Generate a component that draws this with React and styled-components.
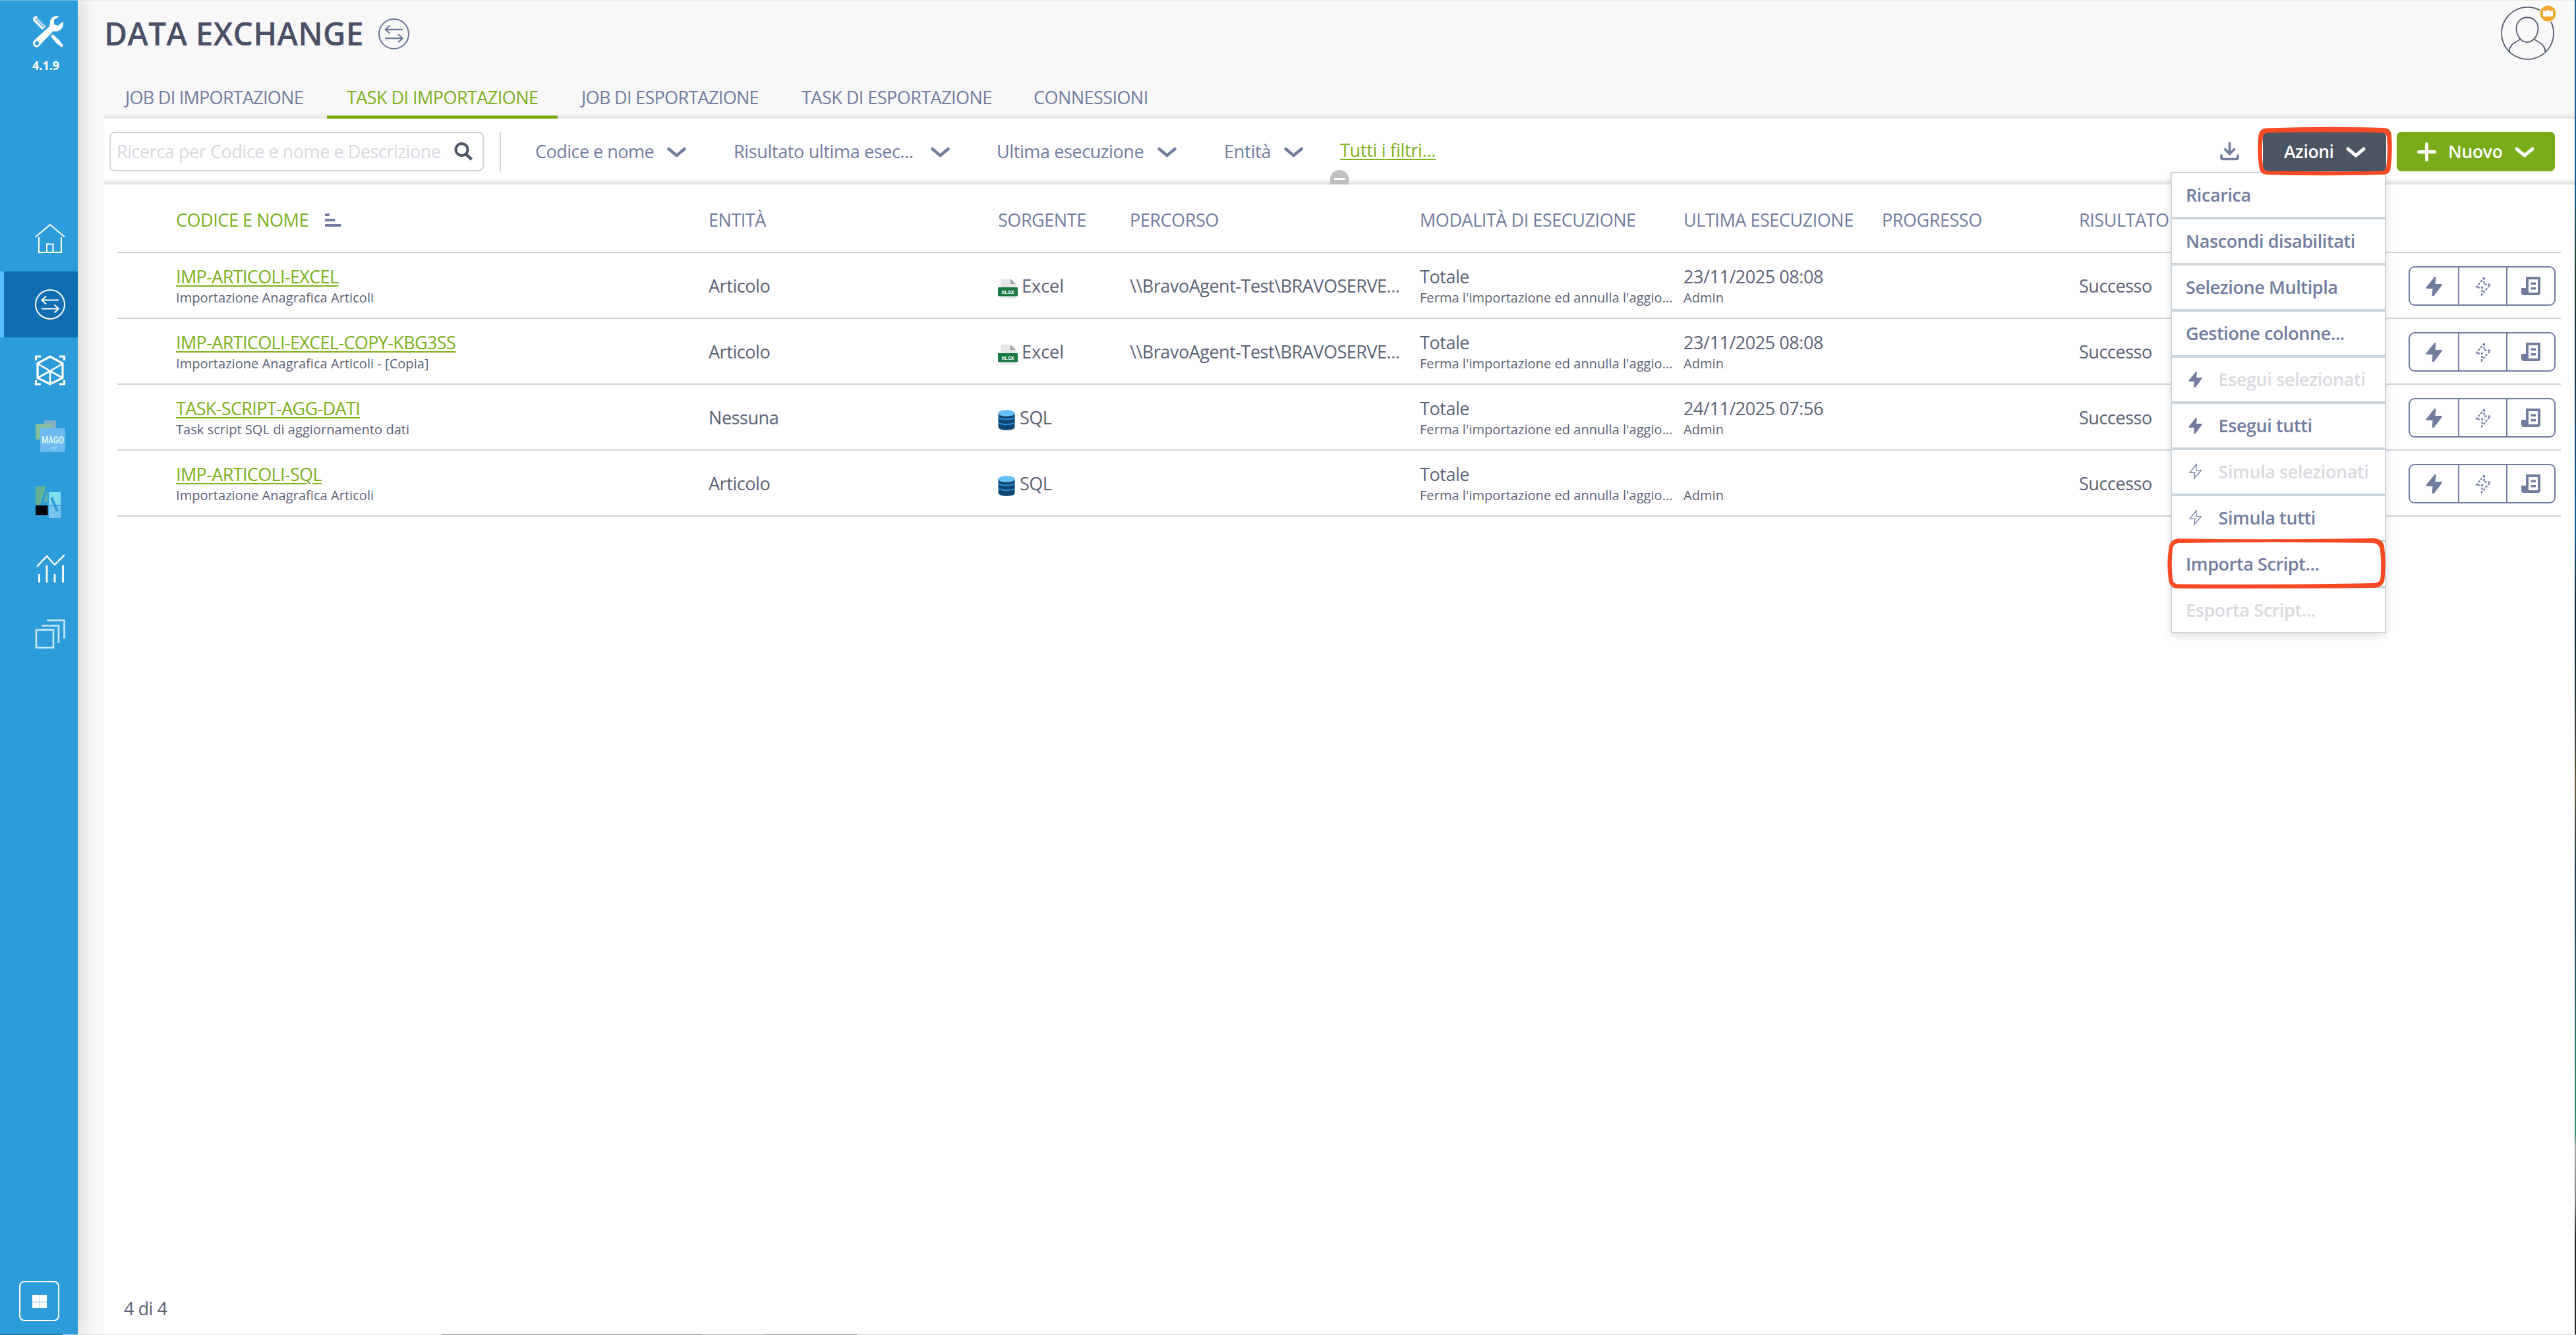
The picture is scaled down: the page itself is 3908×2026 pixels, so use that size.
import React from "react";
import styled, { createGlobalStyle, css } from "styled-components";

const colors = {
  blue: "#2d9cdb",
  blueDark: "#0f6db2",
  blueLight: "#56bfff",
  green: "#7aab18",
  greenText: "#7cb01c",
  slate: "#4b5563",
  muted: "#717c9f",
  text: "#5a6275",
  line: "#cfd3db",
  border: "#ccd5dc",
  disabled: "#d9dbe0",
  red: "#f74923",
};

const GlobalStyle = createGlobalStyle`
  * { box-sizing: border-box; }
  body {
    margin: 0;
    font-family: "Open Sans", "Noto Sans", sans-serif;
    font-size: 27px;
    letter-spacing: -0.45px;
    color: ${colors.text};
    background: #fff;
    overflow: hidden;
  }
`;

/* ---------- shell ---------- */

const Screen = styled.div`
  width: 3908px;
  height: 2026px;
  display: grid;
  grid-template-columns: 118px 1fr 2px;
  grid-template-rows: 2025px 1px;
  overflow: hidden;
`;

const RightEdge = styled.div`
  background: linear-gradient(
    to bottom,
    #1f6496 0%, #1d5c8c 14%, #17402f 20%, #12314a 27%, #1c5f93 39%, #0d2233 46%,
    #22343a 52%, #6b5a41 59%, #1c3a48 65%, #2c6666 75%, #3f8a76 85%, #a6a8a6 86%,
    #7d8080 90%, #1d2222 93%, #262a2a 100%
  );
`;

const BottomEdge = styled.div`
  grid-column: 1 / -1;
  background: linear-gradient(
    to right,
    #1b6c8c 0 95px, #dedede 95px 670px, #8f8f85 670px 1065px, #aaaaaa 1065px 1160px, #8f8f85 1160px 1300px, #d4d4d4 1300px
  );
`;

/* ---------- sidebar ---------- */

const Sidebar = styled.nav`
  display: flex;
  flex-direction: column;
  background: ${colors.blue};
  border-top: 1px solid #7dbde3;
  position: relative;
  z-index: 1;
  box-shadow: 4px 0 26px rgba(0, 0, 0, 0.16);
`;

const Brand = styled.div`
  height: 311px;
  padding: 22px 0 0 48px;
  color: #fff;
`;

const Version = styled.div`
  margin-top: 11px;
  padding-left: 1px;
  font-size: 18px;
  font-weight: 700;
  line-height: 30px;
  letter-spacing: 0;
`;

const NavItem = styled.a`
  height: 100px;
  display: flex;
  align-items: center;
  padding-left: 53px;
  color: #fff;
  ${(p) =>
    p.$active &&
    css`
      background: linear-gradient(to right, ${colors.blueLight} 6px, ${colors.blueDark} 6px);
    `}
  svg {
    display: block;
    overflow: visible;
  }
`;

const AppsButton = styled.button`
  margin: auto 0 20px 29px;
  width: 61px;
  height: 61px;
  padding: 0;
  display: grid;
  place-items: center;
  border: 2.5px solid #fff;
  border-radius: 8px;
  background: transparent;
`;

/* ---------- header ---------- */

const Main = styled.main`
  display: flex;
  flex-direction: column;
  padding-left: 40px;
  background: #f8f8f8;
  border-top: 1px solid #ececec;
`;

const Header = styled.header`
  height: 116px;
  display: flex;
  justify-content: space-between;
  padding: 9px 29px 0 0;
`;

const TitleGroup = styled.div`
  display: flex;
  height: 82px;
  align-items: center;
`;

const Title = styled.h1`
  margin: 0;
  width: 416px;
  font-size: 48px;
  font-weight: 600;
  line-height: 82px;
  color: #4a5068;
  letter-spacing: 0.1px;
  white-space: nowrap;
`;

const Avatar = styled.div`
  width: 83px;
  height: 82px;
  svg {
    display: block;
    overflow: visible;
  }
`;

const Tabs = styled.div`
  display: flex;
  height: 63px;
  background: linear-gradient(to bottom, #f8f8f8 55px, #e0e0e0 63px);
`;

const Tab = styled.a`
  width: ${(p) => p.$w}px;
  padding-left: ${(p) => p.$pl || 30}px;
  line-height: 61px;
  white-space: nowrap;
  letter-spacing: ${(p) => p.$ls}px;
  color: ${(p) => (p.$active ? colors.greenText : colors.muted)};
  ${(p) =>
    p.$active &&
    css`
      box-shadow: inset 0 -4.5px 0 #75a90a;
    `}
`;

/* ---------- toolbar ---------- */

const Toolbar = styled.div`
  height: 100px;
  padding: 20px 30px 0 8px;
  display: flex;
  background: linear-gradient(to bottom, #fff 90px, #f5f5f5 94px, #dedede 100px);
  position: relative;
  z-index: 2;
`;

const Search = styled.div`
  width: 568px;
  height: 60px;
  display: flex;
  align-items: center;
  justify-content: space-between;
  padding: 0 14px 1px 9px;
  border: 2px solid ${colors.border};
  border-radius: 8px;
  background: #fff;
  color: #d9d9e2;
  white-space: nowrap;
  svg {
    flex: none;
  }
`;

const Divider = styled.div`
  width: 2px;
  height: 60px;
  margin: 0 52px 0 24px;
  background: ${colors.border};
`;

const Filter = styled.button`
  width: ${(p) => p.$w}px;
  height: 59px;
  padding: 0;
  display: flex;
  align-items: center;
  border: 0;
  background: none;
  font: inherit;
  letter-spacing: inherit;
  text-align: left;
  color: ${colors.muted};
  white-space: nowrap;
  svg {
    margin-top: 3px;
  }
`;

const Label = styled.span`
  width: ${(p) => p.$w}px;
  letter-spacing: ${(p) => p.$ls}px;
  margin-left: ${(p) => p.$ml || 0}px;
  text-align: left;
  white-space: nowrap;
`;

const AllFilters = styled.a`
  line-height: 55px;
  height: 58px;
  color: ${colors.greenText};
  letter-spacing: -0.28px;
  text-decoration: underline;
  text-decoration-thickness: 2px;
  text-underline-offset: 3px;
  white-space: nowrap;
`;

const Collapse = styled.div`
  position: absolute;
  left: 1860px;
  bottom: 0;
  width: 28px;
  height: 22px;
  border-radius: 14px 14px 0 0;
  background: #bfbfbf;
  display: grid;
  place-items: center;
  &::after {
    content: "";
    width: 17px;
    height: 3px;
    margin-top: 5px;
    background: #fff;
  }
`;

const ToolbarEnd = styled.div`
  margin-left: auto;
  display: flex;
  align-items: flex-start;
`;

const DownloadSlot = styled.div`
  width: 65px;
  padding-top: 15px;
`;

const ActionButton = styled.button`
  width: ${(p) => p.$w}px;
  height: 60px;
  margin-left: ${(p) => p.$ml || 0}px;
  padding: 0 0 1px ${(p) => p.$pl}px;
  display: flex;
  align-items: center;
  border: 0;
  border-radius: 7px;
  background: ${(p) => p.$bg};
  color: #fff;
  font: 600 26.5px "Open Sans", "Noto Sans", sans-serif;
  white-space: nowrap;
  svg {
    margin-top: 2px;
  }
`;

const MenuAnchor = styled.div`
  position: relative;
`;

const Highlight = styled.svg`
  position: absolute;
  left: ${(p) => p.$x}px;
  top: ${(p) => p.$y}px;
  z-index: 2;
  overflow: visible;
  pointer-events: none;
`;

const Menu = styled.ul`
  position: absolute;
  right: 0.5px;
  top: 60.5px;
  width: 327px;
  margin: 0;
  padding: 0;
  list-style: none;
  background: #fff;
  box-shadow: 0 4px 12px rgba(0, 0, 0, 0.12);
`;

const MenuItem = styled.li`
  height: 70px;
  border: 2px solid ${colors.border};
  padding-left: 21.5px;
  display: flex;
  align-items: center;
  font-weight: 600;
  white-space: nowrap;
  letter-spacing: -0.41px;
  color: ${(p) => (p.$disabled ? colors.disabled : colors.muted)};
  svg {
    margin: 0 24.5px 0 4px;
    color: ${colors.muted};
  }
`;

/* ---------- table ---------- */

const Content = styled.section`
  flex: 1;
  display: flex;
  flex-direction: column;
  padding: 0 21px 0 20px;
  background: #fff;
`;

const columns = css`
  display: grid;
  grid-template-columns: 808px 439px 200px 440px 400px 301px 299px 500px 223px;
  padding-left: 89px;
`;

const HeadRow = styled.div`
  ${columns}
  height: 104px;
  padding-top: 5px;
  border-bottom: 2px solid ${colors.border};
  align-items: center;
  color: ${colors.muted};
  white-space: nowrap;
`;

const HeadCell = styled.div`
  display: flex;
  align-items: center;
  gap: 25px;
  ${(p) => p.$active && `color: ${colors.greenText};`}
`;

const Row = styled.div`
  ${columns}
  height: 100px;
  border-bottom: 2px solid ${colors.line};
  white-space: nowrap;
`;

const Cell = styled.div`
  display: flex;
  align-items: center;
  padding-top: 1px;
  letter-spacing: ${(p) => p.$ls}px;
  svg {
    flex: none;
    margin: 8px ${(p) => p.$iconGap || 0}px 0 0;
  }
`;

const Stack = styled.div`
  padding-top: 18px;
`;

const Primary = styled.div`
  height: 35.5px;
  line-height: 36px;
  letter-spacing: ${(p) => p.$ls}px;
`;

const NameLink = styled.a`
  color: ${colors.greenText};
  text-decoration: underline;
  text-decoration-thickness: 2px;
  text-underline-offset: 3px;
`;

const Secondary = styled.div`
  font-size: 20px;
  line-height: 28px;
  letter-spacing: 0.05px;
`;

const RowActions = styled.div`
  align-self: center;
  height: 60px;
  margin-top: 2px;
  display: grid;
  grid-template-columns: 1fr 1fr 1fr;
  border: 2px solid ${colors.muted};
  border-radius: 9px;
  color: ${colors.muted};
`;

const RowAction = styled.button`
  padding: 0;
  border: 0;
  background: none;
  color: inherit;
  display: grid;
  place-items: center;
  & + & {
    border-left: 2px solid ${colors.muted};
  }
`;

const Footer = styled.footer`
  margin-top: auto;
  height: 60px;
  padding-left: 10px;
  line-height: 41px;
`;

/* ---------- icons ---------- */

const Tools = () => (
  <svg width="50" height="50" viewBox="0 0 50 50" display="block">
    <path d="M2 4 L7 1 L22 17 L16 22 L2 8 Z" fill="#fff" />
    <path d="M5.500 5 L18 18.500 M8 3.500 L20 16.500" stroke={colors.blue} strokeWidth="1.200" />
    <path d="M29 32 L32 29 L41 37 L48 46 L46 49 L37 42 Z" fill="#fff" />
    <path
      d="M42 2 C35 -1 27 4 28 13 L27 17 L4 38 C-1 43 5 52 11 47 L33 24 C40 27 49 21 48 12 L47 10 L40 16 L34 14 L34 7 Z"
      fill="#fff"
    />
    <circle cx="8" cy="42.500" r="3" fill={colors.blue} />
  </svg>
);

const Home = () => (
  <svg width="46" height="46" viewBox="0 0 46 46" fill="none" stroke="currentColor" strokeWidth="2">
    <path d="M1 20.500 L23 2 L45 20.500" />
    <path d="M6 21 V44 H40 V21" />
    <path d="M18 44 V31.500 H27.500 V44" />
  </svg>
);

const Exchange = ({ size = 46, color = "currentColor" }) => (
  <svg width={size} height={size} viewBox="0 0 46 46" fill="none" stroke={color} strokeWidth="2">
    <circle cx="23" cy="23" r="22" />
    <path d="M36 16.500 H11 M17 10.500 L10.500 16.500 L17 22.500" />
    <path d="M10 29.500 H35 M29.500 23.500 L36 29.500 L29.500 35.500" />
  </svg>
);

const Cube = () => (
  <svg width="46" height="46" viewBox="0 0 46 46" fill="none" stroke="currentColor" strokeWidth="3.200">
    <path d="M1.500 8 V2 H9 M37 2 H44.500 V8 M1.500 38 V44 H9 M37 44 H44.500 V38" />
    <path d="M23 2 L42 12.500 V34.500 L23 44 L4 34.500 V12.500 Z" />
    <path d="M5 13.500 L23 24 L41 13.500 M23 24 V43 M5 34 L23 24 L41 34" strokeWidth="2.600" />
  </svg>
);

const MagoLogo = () => (
  <svg width="46" height="48" viewBox="0 0 46 48">
    <path d="M14 0 H32 V12 H26 V5 H14 Z" fill="#83adc9" />
    <path d="M1 5 H26 V12 H8 V29 H1 Z" fill="#84c0a0" />
    <rect x="8" y="12" width="38" height="36" fill="#6dbbee" />
    <text x="27" y="35" textAnchor="middle" fontFamily="Roboto, sans-serif" fontWeight="700" fontSize="15" letterSpacing="0" textLength="34" lengthAdjust="spacingAndGlyphs" fill="#d5f4fb">
      MAGO
    </text>
    <text x="27" y="44" textAnchor="middle" fontFamily="Roboto, sans-serif" fontStyle="italic" fontSize="8" fill="#b5e3f8">
      .net
    </text>
  </svg>
);

const TileLogo = () => (
  <svg width="46" height="48" viewBox="0 0 46 48">
    <path d="M1 0 H17 L8 28 H1 Z" fill="#62b195" />
    <path d="M19 5 V24 H14 Z" fill="#62b195" />
    <rect x="21" y="9" width="18" height="19" fill="#84dcf0" />
    <rect x="21" y="29.500" width="18" height="18.500" fill="#78c2ee" />
    <rect x="1" y="29" width="18.500" height="15" fill="#02060c" />
    <path d="M25 17 L34 38" stroke={colors.blue} strokeWidth="4" />
  </svg>
);

const Chart = () => (
  <svg width="46" height="46" viewBox="0 0 46 46" fill="none" stroke="currentColor" strokeWidth="2.400">
    <path d="M3 21 L18 5 L30 18 L45 3" />
    <path d="M6.500 32 V45 M18 19 V45 M30 32 V45 M42.500 19 V45" strokeWidth="2.800" />
  </svg>
);

const Layers = () => (
  <svg width="46" height="46" viewBox="0 0 46 46" fill="none" stroke="#cdeaf8" strokeWidth="2.600">
    <rect x="2" y="17" width="26" height="27" />
    <path d="M10 10.500 H36 V37" />
    <path d="M18 2.500 H44.500 V30" />
  </svg>
);

const WindowsMark = () => (
  <svg width="22" height="20" viewBox="0 0 22 20">
    <rect width="22" height="20" fill="#fff" />
    <path d="M11 0 V20 M0 11 H22" stroke="#b8dff5" strokeWidth="1.300" />
  </svg>
);

const UserIcon = () => (
  <svg width="83" height="82" viewBox="0 0 83 82" fill="none" stroke="#525d6c" strokeWidth="1.800">
    <path d="M59 5.500 A39.500 39.500 0 1 0 76 23" />
    <path d="M40 16.500 C30 16.500 23.500 24 23.500 33 C23.500 44 31 54 40 54 C49 54 56.500 44 56.500 33 C56.500 24 50 16.500 40 16.500 Z" />
    <path d="M29.500 49 C26 53 20 54 16 59 C13 63 12.500 66 12.500 69" />
    <path d="M50.500 49 C54 53 60 54 64 59 C67 63 67.500 66 67.500 69" />
    <circle cx="71.500" cy="10.500" r="12" fill="#f2a830" stroke="none" />
    <path d="M64 5.500 L68 7.500 L71.500 4.500 L75 7.500 L79 5.500 V15 H64 Z" fill="#fff" stroke="none" />
  </svg>
);

const SearchIcon = () => (
  <svg width="29" height="29" viewBox="0 0 29 29" fill="none" stroke="#4b5563" strokeWidth="4">
    <circle cx="11.500" cy="12" r="9" />
    <path d="M18 19 L26.500 27" strokeWidth="4.500" />
  </svg>
);

const Chevron = ({ w = 29, stroke = 4.5 }) => (
  <svg width={w} height="16" viewBox="0 0 29 16" fill="none" stroke="currentColor" strokeWidth={stroke} strokeLinecap="round" strokeLinejoin="round">
    <path d="M2.500 3 L14.500 13 L26.500 3" />
  </svg>
);

const Plus = () => (
  <svg width="29" height="29" viewBox="0 0 29 29" stroke="#fff" strokeWidth="5" strokeLinecap="round">
    <path d="M14.500 2.500 V26.500 M2.500 14.500 H26.500" />
  </svg>
);

const Download = () => (
  <svg width="29" height="29" viewBox="0 0 29 29" fill="none" stroke={colors.muted} strokeWidth="3.600">
    <path d="M14.500 1 V18 M6.500 10.500 L14.500 18.500 L22.500 10.500" />
    <path d="M2 19.500 V24 Q2 26.500 4.500 26.500 H24.500 Q27 26.500 27 24 V19.500" />
  </svg>
);

const Bolt = ({ w = 25, h = 29 }) => (
  <svg width={w} height={h} viewBox="0 0 25 29">
    <path d="M15.500 0 H13.500 L0.500 16 V18 H10.500 L9.500 29 H12.500 L25 12.500 V11 H14.500 Z" fill="currentColor" />
  </svg>
);

const BoltOutline = ({ w = 26, h = 30, dash = "3.500 2.200", stroke = 2.4 }) => (
  <svg width={w} height={h} viewBox="-1 -1 27 31" fill="none" stroke="currentColor" strokeWidth={stroke}>
    <path d="M14.500 1 L1.500 17 H11.500 L10.500 28 L24 12 H14 Z" strokeDasharray={dash} />
  </svg>
);

const LogIcon = () => (
  <svg width="29" height="28" viewBox="0 0 29 28">
    <path fillRule="evenodd" d="M7 0 H29 V24 Q29 28 25 28 H4 Q0 28 0 24 V17 H7 Z M11 4 V24 H25 V4 Z" fill="currentColor" />
    <path d="M14.500 8.500 H22 V12 H14.500 Z M14.500 16 H22 V19.500 H14.500 Z" fill="currentColor" />
  </svg>
);

const SortIcon = () => (
  <svg width="24" height="20" viewBox="0 0 24 20" fill={colors.muted}>
    <path d="M0 0 H7 V4 H0 Z M0 8 H15 V12 H0 Z M0 16 H24 V20 H0 Z" />
  </svg>
);

const ExcelIcon = () => (
  <svg width="30" height="30" viewBox="0 0 30 30">
    <path d="M4 0 H19 L27 8 V30 H4 Z" fill="#e6e7e6" />
    <path d="M19 0 L27 8 H19 Z" fill="#a3a7a5" />
    <rect x="0" y="13" width="30" height="13.500" rx="1" fill="#1b7a43" />
    <text x="15" y="23" textAnchor="middle" fontFamily="Roboto, sans-serif" fontWeight="700" fontSize="8" letterSpacing="0" fill="#fff">
      XLSX
    </text>
  </svg>
);

const SqlIcon = () => (
  <svg width="26" height="31" viewBox="0 0 26 31">
    <path d="M0.500 5 V26 C0.500 32.500 25.500 32.500 25.500 26 V5 Z" fill="#0f4673" />
    <path d="M0.500 10.500 C3 14.500 23 14.500 25.500 10.500 V12.500 C23 16.500 3 16.500 0.500 12.500 Z" fill="#2b8fd6" />
    <path d="M0.500 18 C3 22 23 22 25.500 18 V20 C23 24 3 24 0.500 20 Z" fill="#2b8fd6" />
    <ellipse cx="13" cy="5" rx="12.500" ry="4.800" fill="#67c0f7" />
  </svg>
);

/* ---------- data ---------- */

const tabs = [
  { label: "JOB DI IMPORTAZIONE", w: 338, pl: 32, ls: -0.73 },
  { label: "TASK DI IMPORTAZIONE", w: 350, ls: -0.55, active: true },
  { label: "JOB DI ESPORTAZIONE", w: 340, pl: 36, ls: -0.68 },
  { label: "TASK DI ESPORTAZIONE", w: 352, ls: -0.53 },
  { label: "CONNESSIONI", w: 240, ls: -0.55 },
];

const filters = [
  { label: "Codice e nome", lw: 200, w: 301, ls: -0.51 },
  { label: "Risultato ultima esec...", lw: 299, w: 399, ls: -0.36 },
  { label: "Ultima esecuzione", lw: 244, w: 345, ls: -0.4 },
  { label: "Entità", lw: 91, w: 176, ls: -0.24 },
];

const menu = [
  { label: "Ricarica" },
  { label: "Nascondi disabilitati" },
  { label: "Selezione Multipla" },
  { label: "Gestione colonne..." },
  { label: "Esegui selezionati", icon: "bolt", disabled: true },
  { label: "Esegui tutti", icon: "bolt" },
  { label: "Simula selezionati", icon: "outline", disabled: true },
  { label: "Simula tutti", icon: "outline" },
  { label: "Importa Script..." },
  { label: "Esporta Script...", disabled: true },
];

const headers = [
  "CODICE E NOME",
  "ENTITÀ",
  "SORGENTE",
  "PERCORSO",
  "MODALITÀ DI ESECUZIONE",
  "ULTIMA ESECUZIONE",
  "PROGRESSO",
  "RISULTATO",
];

const path = "\\\\BravoAgent-Test\\BRAVOSERVE...";

const rows = [
  { name: "IMP-ARTICOLI-EXCEL", desc: "Importazione Anagrafica Articoli", entity: "Articolo", source: "Excel", path, date: "23/11/2025 08:08" },
  { name: "IMP-ARTICOLI-EXCEL-COPY-KBG3SS", desc: "Importazione Anagrafica Articoli - [Copia]", entity: "Articolo", source: "Excel", path, date: "23/11/2025 08:08" },
  { name: "TASK-SCRIPT-AGG-DATI", desc: "Task script SQL di aggiornamento dati", entity: "Nessuna", source: "SQL", path: "", date: "24/11/2025 07:56" },
  { name: "IMP-ARTICOLI-SQL", desc: "Importazione Anagrafica Articoli", entity: "Articolo", source: "SQL", path: "", date: "" },
];

export default function App() {
  return (
    <>
      <GlobalStyle />
      <Screen>
        <Sidebar>
          <Brand>
            <Tools />
            <Version>4.1.9</Version>
          </Brand>
          <NavItem><Home /></NavItem>
          <NavItem $active><Exchange /></NavItem>
          <NavItem><Cube /></NavItem>
          <NavItem><MagoLogo /></NavItem>
          <NavItem><TileLogo /></NavItem>
          <NavItem><Chart /></NavItem>
          <NavItem><Layers /></NavItem>
          <AppsButton><WindowsMark /></AppsButton>
        </Sidebar>
        <Main>
          <Header>
            <TitleGroup>
              <Title>DATA EXCHANGE</Title>
              <Exchange size={47} color="#6b7696" />
            </TitleGroup>
            <Avatar><UserIcon /></Avatar>
          </Header>
          <Tabs>
            {tabs.map((t) => (
              <Tab key={t.label} $w={t.w} $pl={t.pl} $ls={t.ls} $active={t.active}>{t.label}</Tab>
            ))}
          </Tabs>
          <Toolbar>
            <Search>
              Ricerca per Codice e nome e Descrizione
              <SearchIcon />
            </Search>
            <Divider />
            {filters.map((f) => (
              <Filter key={f.label} $w={f.w}>
                <Label $w={f.lw} $ls={f.ls}>{f.label}</Label>
                <Chevron />
              </Filter>
            ))}
            <AllFilters>Tutti i filtri...</AllFilters>
            <Collapse />
            <ToolbarEnd>
              <DownloadSlot><Download /></DownloadSlot>
              <MenuAnchor>
                <ActionButton $bg={colors.slate} $w={187} $pl={32}>
                  <Label $w={94} $ls={-0.4}>Azioni</Label>
                  <Chevron w={30} stroke={5} />
                </ActionButton>
                <Highlight $x={-8} $y={-7} width="204" height="73" viewBox="0 0 204 73">
                  <path
                    fillRule="evenodd"
                    fill={colors.red}
                    d="M14 1.500 Q102 -1.500 190 1 Q202 1 203 12 Q205 37 202 61 Q201 72 190 72 Q102 74.500 14 72 Q4 72 2.500 61 Q-1.500 36 1.500 12 Q3 1.500 14 1.500 Z M17 8.500 Q8 8.500 8 16 Q5 36 8 58 Q9 66 16 66.500 Q102 68 187 66.500 Q195 66.500 195.500 58 Q198 36 196 16 Q196 8.500 188 8.500 Q102 6.500 17 8.500 Z"
                  />
                </Highlight>
                <Menu>
                  {menu.map((m) => (
                    <MenuItem key={m.label} $disabled={m.disabled}>
                      {m.icon === "bolt" && <Bolt w={21} h={24} />}
                      {m.icon === "outline" && <BoltOutline w={21} h={25} dash="none" stroke={1.7} />}
                      {m.label}
                    </MenuItem>
                  ))}
                </Menu>
                <Highlight $x={-145} $y={617} width="331" height="76" viewBox="0 0 331 76">
                  <path
                    fillRule="evenodd"
                    fill={colors.red}
                    d="M16 0.500 Q165 2 312 0 Q329 0 329.500 17 Q332 38 329.500 62 Q328 74.500 313 75 Q165 77 16 76 Q3 75 2 62 Q-1.500 38 2.500 14 Q4 2 16 0.500 Z M18 7 Q8.500 8 8 16 Q5.500 38 8 61 Q8.500 69 16 69.500 Q165 71 312 68 Q323 68 323.500 60 Q325 38 323 18 Q322 8 312 7 Q165 5 18 7 Z"
                  />
                </Highlight>
              </MenuAnchor>
              <ActionButton $bg={colors.green} $w={240} $pl={31} $ml={16}>
                <Plus />
                <Label $w={101} $ml={18} $ls={-0.3}>Nuovo</Label>
                <Chevron w={30} stroke={5} />
              </ActionButton>
            </ToolbarEnd>
          </Toolbar>
          <Content>
            <HeadRow>
              {headers.map((h, i) => (
                <HeadCell key={h} $active={i === 0}>
                  {h}
                  {i === 0 && <SortIcon />}
                </HeadCell>
              ))}
            </HeadRow>
            {rows.map((r) => (
              <Row key={r.name}>
                <Stack>
                  <Primary $ls={-0.64}><NameLink>{r.name}</NameLink></Primary>
                  <Secondary>{r.desc}</Secondary>
                </Stack>
                <Cell>{r.entity}</Cell>
                <Cell $iconGap={r.source === "Excel" ? 6 : 7} $ls={r.source === "Excel" ? 0 : -0.5}>
                  {r.source === "Excel" ? <ExcelIcon /> : <SqlIcon />}
                  {r.source}
                </Cell>
                <Cell $ls={-0.48}>{r.path}</Cell>
                <Stack>
                  <Primary>Totale</Primary>
                  <Secondary>Ferma l'importazione ed annulla l'aggio...</Secondary>
                </Stack>
                <Stack>
                  <Primary>{r.date}</Primary>
                  <Secondary>Admin</Secondary>
                </Stack>
                <Cell />
                <Cell>Successo</Cell>
                <RowActions>
                  <RowAction><Bolt /></RowAction>
                  <RowAction><BoltOutline /></RowAction>
                  <RowAction><LogIcon /></RowAction>
                </RowActions>
              </Row>
            ))}
            <Footer>4 di 4</Footer>
          </Content>
        </Main>
        <RightEdge />
        <BottomEdge />
      </Screen>
    </>
  );
}
